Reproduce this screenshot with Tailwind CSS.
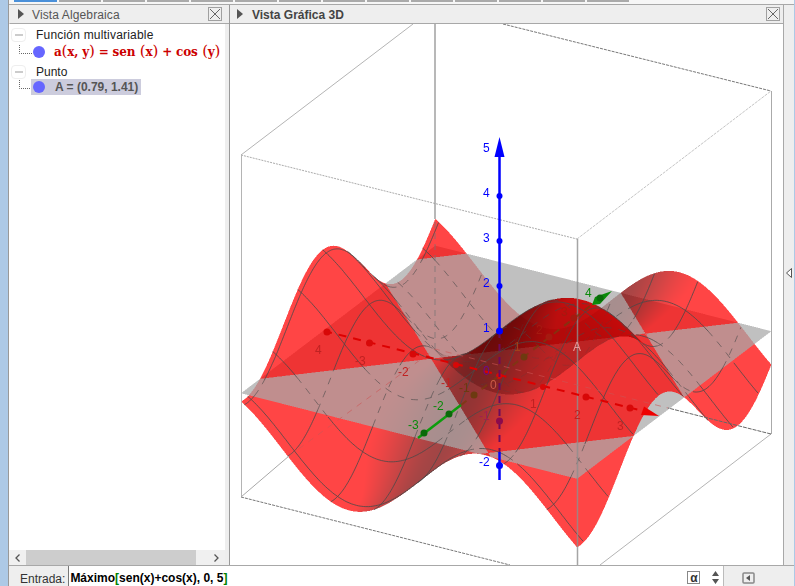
<!DOCTYPE html>
<html lang="es">
<head>
    <meta charset="UTF-8">
    <title>Vista Gráfica 3D</title>
    <script src="https://cdn.jsdelivr.net/npm/@tailwindcss/browser@4"></script>
</head>
<body class="w-[795px] h-[586px] overflow-hidden flex bg-[#eeeeee] text-xs [font-family:'Liberation_Sans',sans-serif]">
    <!-- ventana: borde azul izquierdo -->
    <div class="w-2 shrink-0 bg-[#adc9e6]"></div>

    <div class="flex-1 flex flex-col min-w-0 border-l border-[#999999]">
        <!-- pestañas superiores -->
        <div class="h-1 flex items-start gap-[2px] pl-[5px] bg-[#f6f6f6]">
            <div class="w-[43px] h-[2px] bg-[#4a90d9]"></div>
            <div class="w-[42px] h-[2px] bg-[#aaaaaa]"></div>
            <div class="w-[42px] h-[2px] bg-[#aaaaaa]"></div>
            <div class="w-[42px] h-[2px] bg-[#aaaaaa]"></div>
            <div class="w-[42px] h-[2px] bg-[#aaaaaa]"></div>
            <div class="w-[42px] h-[2px] bg-[#aaaaaa]"></div>
            <div class="w-[42px] h-[2px] bg-[#aaaaaa]"></div>
            <div class="w-[42px] h-[2px] bg-[#aaaaaa]"></div>
            <div class="w-[42px] h-[2px] bg-[#aaaaaa]"></div>
            <div class="w-[42px] h-[2px] bg-[#aaaaaa]"></div>
            <div class="w-[42px] h-[2px] bg-[#aaaaaa]"></div>
            <div class="w-[42px] h-[2px] bg-[#aaaaaa]"></div>
            <div class="w-[42px] h-[2px] bg-[#aaaaaa]"></div>
            <div class="w-[42px] h-[2px] bg-[#aaaaaa]"></div>
        </div>

        <!-- paneles -->
        <div class="h-[562px] flex border-y border-[#a8a8a8]">
            <!-- Vista Algebraica -->
            <section class="w-[221px] shrink-0 flex flex-col border-r border-[#999999]">
                <header class="h-[19px] flex items-center pl-[8px] border-b border-[#a8a8a8] border-l border-l-[#eeeeee]">
                    <svg width="6" height="10" viewBox="0 0 6 10"><path d="M0 0 L6 5 L0 10 Z" fill="#555555"/></svg>
                    <span class="ml-[8px] pt-[1px] tracking-[0.12px] text-[#555555]">Vista Algebraica</span>
                    <svg class="ml-auto mr-[7px]" width="14" height="14" viewBox="0 0 14 14"><rect x="0.5" y="0.5" width="13" height="13" fill="#eeeeee" stroke="#a0a0a0"/><path d="M2 2 L12 12 M12 2 L2 12" stroke="#666666" fill="none"/></svg>
                </header>
                <div class="flex-1 flex min-h-0">
                    <div class="flex-1 flex flex-col bg-white min-w-0">
                        <div class="flex-1 pt-[4px] pl-[2px] text-[#222222]">
                            <div class="h-[14px] flex items-center">
                                <div class="w-[15px] h-[14px] rounded-sm border border-[#eeeeee] flex items-center justify-center"><div class="w-[8px] h-[2px] bg-[#cccccc]"></div></div>
                                <span class="ml-[10px] tracking-[0.2px]">Función multivariable</span>
                            </div>
                            <div class="h-[19px] flex items-center">
                                <svg class="ml-[8px]" width="14" height="14" viewBox="0 0 14 14"><path d="M0.5 0 V8.5 H14" fill="none" stroke="#666666" stroke-dasharray="1 1"/></svg>
                                <div class="w-[12px] h-[12px] rounded-full bg-[#6666ff]"></div>
                                <span class="ml-[9px] whitespace-nowrap font-bold tracking-[-0.18px] text-[#cc0000] [font-family:'DejaVu_Serif',serif] text-[12px]">a<span class="text-[15px] font-normal">(</span>x, y<span class="text-[15px] font-normal">)</span> = sen<span class="text-[15px] font-normal"> (</span>x<span class="text-[15px] font-normal">)</span> + cos<span class="text-[15px] font-normal"> (</span>y<span class="text-[15px] font-normal">)</span></span>
                            </div>
                            <div class="h-[14px] mt-[4px] flex items-center">
                                <div class="w-[15px] h-[14px] rounded-sm border border-[#eeeeee] flex items-center justify-center"><div class="w-[8px] h-[2px] bg-[#cccccc]"></div></div>
                                <span class="ml-[10px]">Punto</span>
                            </div>
                            <div class="h-[16px] flex items-center">
                                <svg class="ml-[8px]" width="12" height="14" viewBox="0 0 12 14"><path d="M0.5 0 V8.5 H12" fill="none" stroke="#666666" stroke-dasharray="1 1"/></svg>
                                <div class="w-[110px] h-[16px] bg-[#ccccdd] flex items-center pl-[2px]">
                                    <div class="w-[12px] h-[12px] rounded-full bg-[#6666ff]"></div>
                                    <span class="ml-[10px] font-bold text-[#555555]">A = (0.79, 1.41)</span>
                                </div>
                            </div>
                        </div>
                        <!-- barra de desplazamiento -->
                        <div class="h-[15px] flex items-center bg-[#f0f0f0]">
                            <svg class="ml-[6px]" width="5" height="8" viewBox="0 0 5 8"><path d="M4.5 0.5 L1 4 L4.5 7.5" fill="none" stroke="#555555" stroke-width="1.3"/></svg>
                            <div class="ml-[6px] w-[170px] h-[15px] bg-[#cdcdcd]"></div>
                            <svg class="ml-[18px]" width="5" height="8" viewBox="0 0 5 8"><path d="M0.5 0.5 L4 4 L0.5 7.5" fill="none" stroke="#555555" stroke-width="1.3"/></svg>
                        </div>
                    </div>
                    <div class="w-[4px] bg-[#eeeeee]"></div>
                </div>
            </section>

            <!-- Vista Gráfica 3D -->
            <section class="w-[554px] shrink-0 flex flex-col border-r border-[#a8a8a8]">
                <header class="h-[19px] flex items-center pl-[7px] border-b border-[#a8a8a8]">
                    <svg width="6" height="10" viewBox="0 0 6 10"><path d="M0 0 L6 5 L0 10 Z" fill="#555555"/></svg>
                    <span class="ml-[9px] pt-[1px] font-bold text-[#444444]">Vista Gráfica 3D</span>
                    <svg class="ml-auto mr-[3px]" width="14" height="14" viewBox="0 0 14 14"><rect x="0.5" y="0.5" width="13" height="13" fill="#eeeeee" stroke="#a0a0a0"/><path d="M2 2 L12 12 M12 2 L2 12" stroke="#666666" fill="none"/></svg>
                </header>
                <div class="relative flex-1 bg-white overflow-hidden">
                    <canvas id="plot" width="553" height="541" class="block"></canvas>
                    <svg id="overlay" class="absolute inset-0" width="553" height="541" viewBox="230 24 553 541" font-size="12">
                        <g id="mesh" fill="none"></g>

                        <!-- caja -->
                        <g fill="none">
                            <path d="M241 155 L413 24" stroke="#b4b4b4"/>
                            <path d="M503 24 L771 91" stroke="#777777" stroke-dasharray="3 1"/>
                            <path d="M241 155 L577 239" stroke="#aaaaaa" stroke-dasharray="2 1"/>
                            <path d="M577 239 L771 91" stroke="#c4c4c4" stroke-dasharray="3 1"/>
                            <path d="M241.5 155 V497" stroke="#b4b4b4"/>
                            <path d="M771.5 91 V434" stroke="#aaaaaa"/>
                            <path d="M577.5 239 V565" stroke="#8f8f8f" stroke-opacity="0.8" stroke-width="1.5"/>
                            <path d="M435 24 V219" stroke="#a0a0a0" stroke-width="1.5"/>
                            <path d="M435 222 V349" stroke="#777777" stroke-opacity="0.6" stroke-width="1.2" stroke-dasharray="6 5"/>
                            <path d="M241 497 L510 565" stroke="#777777" stroke-dasharray="3 1"/>
                            <path d="M771 434 L600 565" stroke="#b4b4b4"/>
                            <path d="M771 434 L668 408" stroke="#666666" stroke-dasharray="4 1"/>
                            <path d="M241 497 L289 456" stroke="#a8a8a8"/>
                            <path d="M289 456 L435 349 L668 408" stroke="#cc5555" stroke-opacity="0.6" stroke-dasharray="6 6"/>
                        </g>

                        <!-- eje x -->
                        <path d="M324 331 L643 411" fill="none" stroke="#dd0000" stroke-width="2" stroke-dasharray="8 7"/>
                        <path d="M659 416 L644 406.5 L641 415 Z" fill="#ee0000"/>
                        <g fill="#d80808">
                            <circle cx="327" cy="332" r="3.5"/><circle cx="369.500" cy="343" r="3.5"/><circle cx="413" cy="354" r="3.5"/><circle cx="456" cy="365" r="3"/>
                            <circle cx="499" cy="376" r="3"/><circle cx="543" cy="387" r="3"/><circle cx="586" cy="397" r="3.5"/><circle cx="630" cy="408" r="3.5"/>
                        </g>

                        <!-- eje y -->
                        <path d="M461 405 L590 306" fill="none" stroke="#7a3a10" stroke-opacity="0.8" stroke-width="2" stroke-dasharray="7 6"/>
                        <path d="M418 438 L461 405" fill="none" stroke="#0c9c0c" stroke-width="2.500"/>
                        <circle cx="424" cy="433" r="3.5" fill="#0a6a0a"/><circle cx="449" cy="414" r="3.5" fill="#0a6a0a"/>
                        <g fill="#6d3a10"><circle cx="474" cy="395" r="3.5"/><circle cx="524" cy="357" r="3.5"/></g>
                        <g fill="#a51a10"><circle cx="549" cy="337" r="3.5"/><circle cx="574" cy="318" r="3.5"/></g>
                        <path d="M612 291 L595 297 L592 305 L600 304 Z" fill="#0a8a0a"/>
                        <circle cx="600" cy="298" r="3.5" fill="#0a6a0a"/>

                        <!-- eje z -->
                        <path d="M499.500 331 V452" fill="none" stroke="#6c0a5c" stroke-width="2" stroke-dasharray="7 6"/>
                        <path d="M499.500 452 V480 M499.500 156 V331" fill="none" stroke="#0000ff" stroke-width="2.500"/>
                        <path d="M499.500 137 L504.500 157 L494.500 157 Z" fill="#0000ff"/>
                        <g fill="#0000ff">
                            <circle cx="499.500" cy="196" r="3"/><circle cx="499.500" cy="241" r="3"/><circle cx="499.500" cy="286" r="3"/><circle cx="499.500" cy="331" r="3.5"/><circle cx="499.500" cy="465.500" r="3.5"/>
                        </g>
                        <circle cx="499.500" cy="421" r="3.5" fill="#8c0a4c"/>

                        <!-- etiquetas -->
                        <g fill="#0000ff">
                            <text x="483" y="152">5</text><text x="483" y="197">4</text><text x="483" y="242">3</text><text x="483" y="287">2</text><text x="483" y="332">1</text><text x="479" y="466">-2</text>
                        </g>
                        <text x="483" y="375" fill="#6c0a8c">0</text>
                        <text x="479" y="420" fill="#a02050">-1</text>
                        <g fill="#c02222">
                            <text x="315" y="354">4</text><text x="355" y="365">-3</text><text x="398" y="376">-2</text><text x="441" y="387">-1</text>
                            <text x="490" y="389" fill="#cc5a4a">0</text><text x="530" y="408">1</text><text x="574" y="419">2</text><text x="617" y="430">3</text>
                        </g>
                        <g fill="#0a8a0a" font-size="12">
                            <text x="408" y="429">-3</text><text x="433" y="410">-2</text><text x="585" y="297">4</text>
                        </g>
                        <text x="459" y="392" fill="#6d3a10">-1</text>
                        <text x="514" y="351" fill="#a0401a">1</text>
                        <text x="536" y="334" fill="#a51a10">2</text>
                        <text x="561" y="316" fill="#a51a10">3</text>
                        <text x="573" y="351" fill="#e89a9a">A</text>
                    </svg>
                </div>
            </section>

            <!-- franja derecha -->
            <aside class="flex-1 flex items-center justify-center pb-[24px]">
                <svg width="6" height="10" viewBox="0 0 6 10"><path d="M5.500 0.500 V9.500 L0.500 5 Z" fill="#ffffff" stroke="#555555"/></svg>
            </aside>
        </div>

        <!-- barra de entrada -->
        <div class="flex-1 flex items-stretch">
            <span class="ml-[11px] self-end leading-[14px] text-[#333333]">Entrada:</span>
            <div class="ml-[3px] w-[656px] flex items-center bg-white border-l border-[#777777] border-r-[#bbbbbb] border-r pl-[1px]">
                <span class="font-bold text-black pt-[4px]">Máximo<span class="text-[#008000]">[</span>sen(x)+cos(x), 0, 5<span class="text-[#008000]">]</span></span>
                <div class="ml-auto flex items-center mr-[4px] pt-[3px]">
                    <div class="w-[13px] h-[13px] border border-[#888888] flex items-center justify-center font-bold text-[#333333] leading-none">α</div>
                    <svg class="ml-[12px]" width="7" height="13" viewBox="0 0 7 13"><path d="M3.500 0 L7 5 H0 Z M0 8 H7 L3.500 13 Z" fill="#555555"/></svg>
                </div>
            </div>
            <div class="ml-[18px] pt-[6px]">
                <svg width="13" height="12" viewBox="0 0 13 12"><rect x="1" y="1" width="11" height="10" rx="1" fill="#eeeeee" stroke="#888888" stroke-width="1.5"/><path d="M8 3 V9 L4 6 Z" fill="#555555"/></svg>
            </div>
        </div>
    </div>
    <div class="w-px shrink-0 bg-[#adc9e6]"></div>

    <script>
        // proyección ortogonal medida sobre los ejes de la vista 3D
        const OX = 499, OY = 376, DET = 1095.8;
        const XMIN = -4.08, XMAX = 3.7, YMIN = -3.27, YMAX = 4.5, ZTOP = 2.05;

        const f = (x, y) => Math.sin(x) + Math.cos(y);
        const screenX = (x, y) => OX + 43.2 * x + 25 * y;
        const screenY = (x, y, z) => OY + 11 * x - 19 * y - 45 * z;

        // rango de z en que el rayo del pixel queda dentro del dominio
        function rayRange(a, b) {
            let lo = -2.05, hi = ZTOP;
            const x0 = (19 * a + 25 * b) / DET, kx = 25 * 45 / DET;
            const y0 = (11 * a - 43.2 * b) / DET, ky = -43.2 * 45 / DET;
            lo = Math.max(lo, (XMIN - x0) / kx);
            hi = Math.min(hi, (XMAX - x0) / kx);
            lo = Math.max(lo, (y0 - YMAX) / -ky);
            hi = Math.min(hi, (y0 - YMIN) / -ky);
            return { lo, hi, x0, kx, y0, ky };
        }

        function light(x, y) {
            const gx = Math.cos(x), gy = -Math.sin(y);
            const len = Math.sqrt(gx * gx + gy * gy + 1);
            let nx = -gx / len, ny = -gy / len, nz = 1 / len;
            if (nx * 0.45 - ny * 0.777 + nz * 0.438 < 0) { nx = -nx; ny = -ny; nz = -nz; }
            const d = Math.abs(nx * 0.7 + nz * 0.7);
            return Math.min(1, 0.5 + 0.75 * d);
        }

        const canvas = document.getElementById('plot');
        const ctx = canvas.getContext('2d');
        const image = ctx.createImageData(553, 541);
        const SS = 2;

        for (let py = 210; py < 552; py++) {
            for (let px = 236; px < 776; px++) {
                let sr = 0, sg = 0, sb = 0;
                for (let i = 0; i < SS; i++) for (let j = 0; j < SS; j++) {
                    const a = px + (i + 0.5) / SS - OX, b = py + (j + 0.5) / SS - OY;
                    let r = 255, g = 255, bl = 255;
                    const ray = rayRange(a, b);
                    if (ray.lo < ray.hi) {
                        const step = 0.08;
                        let z = ray.lo;
                        let prev = Math.sin(ray.x0 + ray.kx * z) + Math.cos(ray.y0 + ray.ky * z) - z;
                        let planeDone = ray.lo > 0;
                        let hits = 0;
                        while (z < ray.hi) {
                            const nz = Math.min(z + step, ray.hi);
                            const x = ray.x0 + ray.kx * nz, y = ray.y0 + ray.ky * nz;
                            const cur = Math.sin(x) + Math.cos(y) - nz;
                            let hit = null;
                            if (prev * cur <= 0) {
                                let l = z, h = nz, gl = prev;
                                for (let k = 0; k < 6; k++) {
                                    const m = (l + h) / 2;
                                    const gm = Math.sin(ray.x0 + ray.kx * m) + Math.cos(ray.y0 + ray.ky * m) - m;
                                    if (gl * gm <= 0) h = m; else { l = m; gl = gm; }
                                }
                                hit = (l + h) / 2;
                            }
                            // el plano z = 0 va en su orden de profundidad
                            if (!planeDone && nz >= 0 && (hit === null || hit >= 0)) {
                                r = r * 0.265 + 169 * 0.735; g = g * 0.265 + 169 * 0.735; bl = bl * 0.265 + 169 * 0.735;
                                planeDone = true;
                            }
                            if (hit !== null) {
                                let L = light(ray.x0 + ray.kx * hit, ray.y0 + ray.ky * hit);
                                if (hits > 0) L *= 0.78; // donde la superficie se solapa queda más oscura
                                hits++;
                                r = r * 0.27 + 255 * L * 0.73; g = g * 0.27; bl = bl * 0.27;
                            }
                            if (!planeDone && nz >= 0) {
                                r = r * 0.265 + 169 * 0.735; g = g * 0.265 + 169 * 0.735; bl = bl * 0.265 + 169 * 0.735;
                                planeDone = true;
                            }
                            prev = cur; z = nz;
                        }
                    }
                    sr += r; sg += g; sb += bl;
                }
                const n = (py - 24) * 553 * 4 + (px - 230) * 4;
                image.data[n] = sr / (SS * SS);
                image.data[n + 1] = sg / (SS * SS);
                image.data[n + 2] = sb / (SS * SS);
                image.data[n + 3] = 255;
            }
        }
        ctx.fillStyle = '#ffffff';
        ctx.fillRect(0, 0, 553, 541);
        // solo se copia la zona calculada, el resto queda blanco
        ctx.putImageData(image, 0, 0, 6, 186, 540, 342);

        // capas que tapan un punto de la malla, vistas desde la cámara
        function layersInFront(x, y, z) {
            const a = screenX(x, y) - OX, b = screenY(x, y, z) - OY;
            const ray = rayRange(a, b);
            let count = 0;
            if (z < -0.04 && ray.lo < 0 && ray.hi > 0) count++;
            let t = z + 0.07;
            let prev = Math.sin(ray.x0 + ray.kx * t) + Math.cos(ray.y0 + ray.ky * t) - t;
            while (t < ray.hi) {
                const nt = t + 0.05;
                const cur = Math.sin(ray.x0 + ray.kx * nt) + Math.cos(ray.y0 + ray.ky * nt) - nt;
                if (nt <= ray.hi && prev * cur <= 0) count++;
                prev = cur; t = nt;
            }
            return Math.min(count, 2);
        }

        const meshGroup = document.getElementById('mesh');
        function addRun(points, level) {
            if (points.length < 2) return;
            const p = document.createElementNS('http://www.w3.org/2000/svg', 'path');
            p.setAttribute('d', 'M' + points.map(q => q[0].toFixed(1) + ' ' + q[1].toFixed(1)).join(' L'));
            p.setAttribute('stroke', '#4a4a4a');
            p.setAttribute('stroke-width', '1');
            if (level === 0) {
                p.setAttribute('stroke-opacity', '0.8');
            } else {
                p.setAttribute('stroke-opacity', level === 1 ? '0.6' : '0.22');
                p.setAttribute('stroke-dasharray', '7 7');
            }
            meshGroup.appendChild(p);
        }
        function traceLine(pointAt, from, to) {
            let run = [], level = -1;
            for (let s = from; s <= to + 0.001; s += 0.04) {
                const [x, y] = pointAt(s);
                const z = f(x, y);
                const l = layersInFront(x, y, z);
                const q = [screenX(x, y), screenY(x, y, z)];
                if (l !== level && run.length) { run.push(q); addRun(run, level); run = []; }
                run.push(q);
                level = l;
            }
            addRun(run, level);
        }
        for (let k = -4; k <= 3; k++) traceLine(s => [k, s], YMIN, YMAX);
        for (let k = -3; k <= 4; k++) traceLine(s => [s, k], XMIN, XMAX);
    </script>
</body>
</html>
